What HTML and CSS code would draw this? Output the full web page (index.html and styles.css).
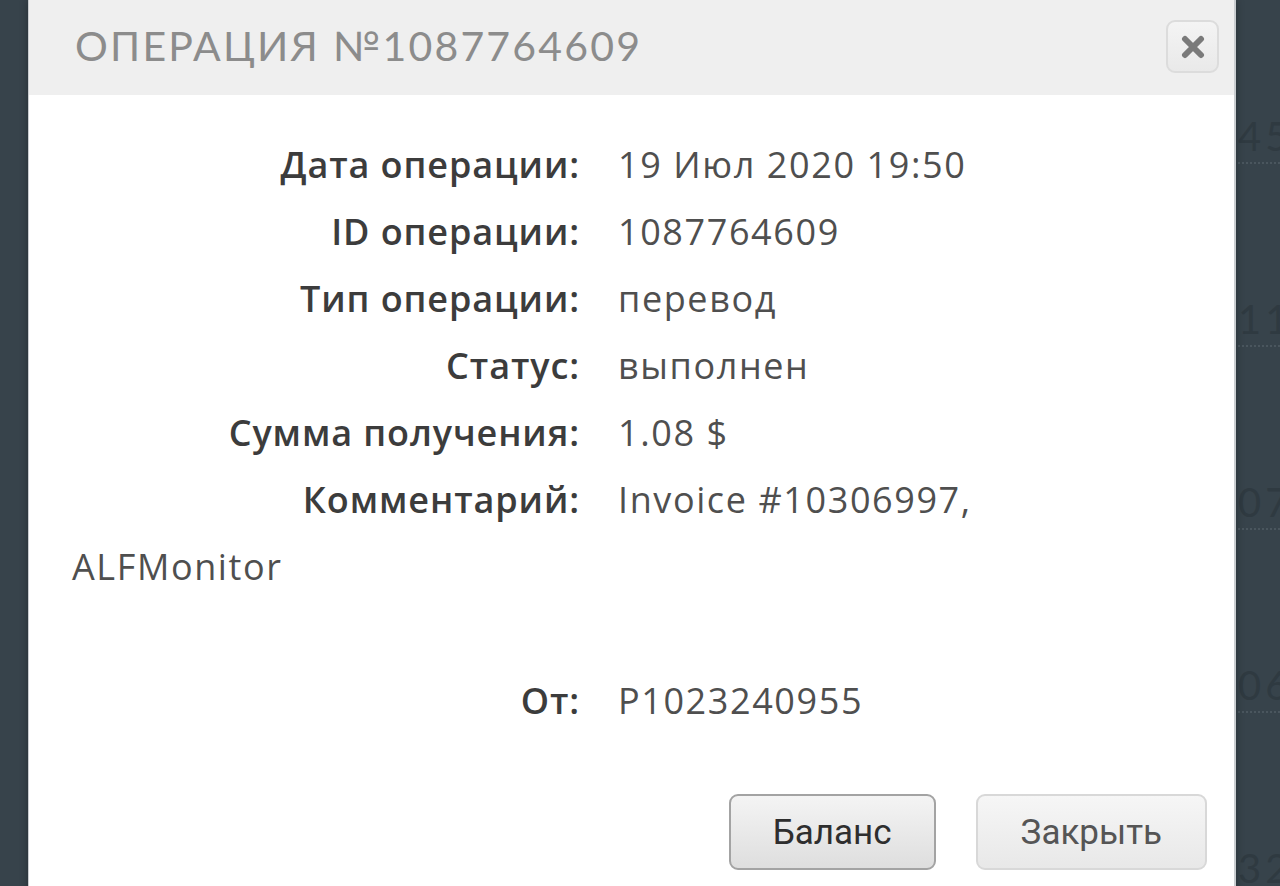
FILE: index.html
```html
<!DOCTYPE html>
<html lang="ru">
<head>
    <meta charset="UTF-8">
    <title>Операция №1087764609</title>
    <link rel="stylesheet" href="styles.css">
</head>
<body>
    <div class="history">
        <div class="history-row">4571</div>
        <div class="history-row">1130</div>
        <div class="history-row">0744</div>
        <div class="history-row">0612</div>
        <div class="history-row">3205</div>
    </div>

    <div class="modal">
        <div class="modal-header">
            <h1 class="modal-title">Операция №1087764609</h1>
            <button class="modal-close" type="button" aria-label="Закрыть">
                <svg width="24" height="24" viewBox="0 0 24 24">
                    <path d="M4 4 L20 20 M20 4 L4 20" stroke="#7a7a7a" stroke-width="6" stroke-linecap="round"/>
                </svg>
            </button>
        </div>

        <div class="modal-body">
            <div class="row"><span class="label">Дата операции:</span><span class="value">19 Июл 2020 19:50</span></div>
            <div class="row"><span class="label">ID операции:</span><span class="value">1087764609</span></div>
            <div class="row"><span class="label">Тип операции:</span><span class="value">перевод</span></div>
            <div class="row"><span class="label">Статус:</span><span class="value">выполнен</span></div>
            <div class="row"><span class="label">Сумма получения:</span><span class="value">1.08 $</span></div>
            <div class="row"><span class="label">Комментарий:</span><span class="value">Invoice #10306997, ALFMonitor</span></div>
            <div class="row row-spaced"><span class="label">От:</span><span class="value">P1023240955</span></div>
        </div>

        <div class="modal-footer">
            <button class="btn btn-primary" type="button">Баланс</button>
            <button class="btn" type="button">Закрыть</button>
        </div>
    </div>
</body>
</html>
```

FILE: styles.css
```css
:root {
    --backdrop: #37434b;
    --backdrop-text: #2f3a41;
    --header-bg: #efefef;
    --surface: #ffffff;
    --text-label: #3c3c3c;
    --text-value: #4f4f4f;
    --title: #8c8c8c;
}

* {
    margin: 0;
    padding: 0;
    box-sizing: border-box;
}

html, body {
    height: 100%;
    overflow: hidden;
}

body {
    font-family: 'Open Sans', 'Liberation Sans', sans-serif;
    background: var(--backdrop);
    position: relative;
}

/* table behind the modal */
.history {
    display: flex;
    flex-direction: column;
    padding: 112px 0 0 1238px;
}

.history-row {
    height: 183px;
    font-family: 'Lato', sans-serif;
    font-size: 40px;
    letter-spacing: 4px;
    color: var(--backdrop-text);
}

.history-row::after {
    content: '';
    display: block;
    margin-top: 2px;
    border-bottom: 2px dotted #4a565e;
}

.modal {
    position: absolute;
    top: 0;
    left: 28px;
    width: 1208px;
    height: 920px;
    background: var(--surface);
    border-left: 1px solid #c9cdd0;
    border-right: 2px solid #c9cdd0;
    box-shadow: 0 0 8px rgba(0,0,0,0.3);
}

.modal-header {
    height: 95px;
    background: var(--header-bg);
    display: flex;
    align-items: center;
    justify-content: space-between;
    padding: 0 15px 0 46px;
}

.modal-title {
    font-family: 'Lato', sans-serif;
    font-weight: 400;
    font-size: 41px;
    letter-spacing: 2.2px;
    text-transform: uppercase;
    color: var(--title);
    margin-top: -4px;
}

.modal-close {
    width: 53px;
    height: 53px;
    border: 2px solid #dcdcdc;
    border-radius: 9px;
    background: linear-gradient(#f4f4f4, #e9e9e9);
    display: flex;
    align-items: center;
    justify-content: center;
    margin-top: -2px;
}

.modal-body {
    padding: 36px 88px 0 43px;
    font-size: 36px;
    line-height: 67px;
    letter-spacing: 1.6px;
}

.label {
    display: inline-block;
    width: 508px;
    margin-right: 38px;
    text-align: right;
    font-weight: 600;
    letter-spacing: 0.9px;
    color: var(--text-label);
}

.value {
    color: var(--text-value);
}

.row-spaced {
    margin-top: 67px;
}

.modal-footer {
    display: flex;
    justify-content: flex-end;
    gap: 40px;
    padding: 60px 27px 0 0;
}

.btn {
    height: 76px;
    padding: 0 43px;
    font-family: 'Roboto', sans-serif;
    font-size: 35px;
    color: #555;
    background: linear-gradient(#f6f6f6, #e8e8e8);
    border: 2px solid #d8d8d8;
    border-radius: 9px;
}

.btn-primary {
    color: #2e2e2e;
    background: linear-gradient(#f4f4f4, #dedede);
    border-color: #a3a3a3;
    padding: 0 42px;
}
```
